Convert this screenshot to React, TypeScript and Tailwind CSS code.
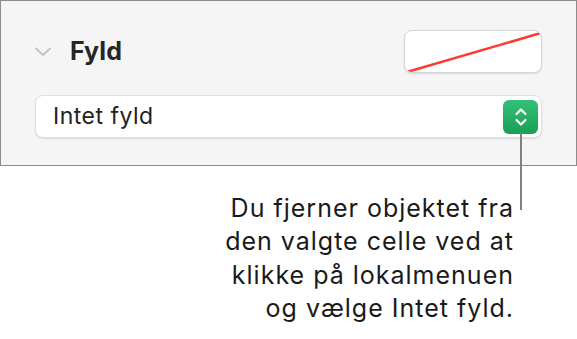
export default function App() {
  return (
    <div className="relative h-[339px] w-[577px] overflow-hidden bg-white font-['Inter',sans-serif]">
      <div className="h-[166px] border border-[#8c8c8c] bg-[#f5f5f5] pl-[34px] pr-[34px] pt-[29px]">
        <div className="flex h-[43px] items-center">
          <svg className="-ml-[1px]" width="18" height="10" viewBox="0 0 18 10">
            <path d="M2 1.5 L9 8 L16 1.5" fill="none" stroke="#c4c4c4" strokeWidth="2" strokeLinecap="round" strokeLinejoin="round" />
          </svg>
          <span className="ml-[18px] text-[25px] font-bold tracking-[0.2px] text-[#262626]">Fyld</span>
          <div className="ml-auto h-[43px] w-[138px] overflow-hidden rounded-[8px] border border-[#d6d6d6] bg-white shadow-[0_1px_2px_rgba(0,0,0,0.12)]">
            <svg width="138" height="43" viewBox="0 0 138 43">
              <line x1="2" y1="41" x2="136" y2="2" stroke="#ff3b30" strokeWidth="2.5" />
            </svg>
          </div>
        </div>
        <div className="mt-[22px] flex h-[43px] items-center rounded-[8px] border border-[#e0e0e0] bg-white pl-[17px] pr-[3px] shadow-[0_1px_2px_rgba(0,0,0,0.1)]">
          <span className="text-[23px] tracking-[0.5px] text-[#222]">Intet fyld</span>
          <div className="ml-auto flex h-[34px] w-[35px] items-center justify-center rounded-[6px] bg-gradient-to-b from-[#33c078] to-[#1a9f54]">
            <svg width="14" height="22" viewBox="0 0 14 22">
              <path d="M2.5 8 L7 3.5 L11.5 8" fill="none" stroke="white" strokeWidth="2.2" strokeLinecap="round" strokeLinejoin="round" />
              <path d="M2.5 14 L7 18.5 L11.5 14" fill="none" stroke="white" strokeWidth="2.2" strokeLinecap="round" strokeLinejoin="round" />
            </svg>
          </div>
        </div>
      </div>

      <div className="absolute left-[520px] top-[133px] h-[77px] w-[2px] bg-[#808080]" />

      <div className="mt-[26px] pr-[63px] text-right text-[25px] leading-[33.3px] tracking-[1px] text-[#1a1a1a]">
        <p>Du fjerner objektet fra</p>
        <p>den valgte celle ved at</p>
        <p>klikke på lokalmenuen</p>
        <p>og vælge Intet fyld.</p>
      </div>
    </div>
  );
}
